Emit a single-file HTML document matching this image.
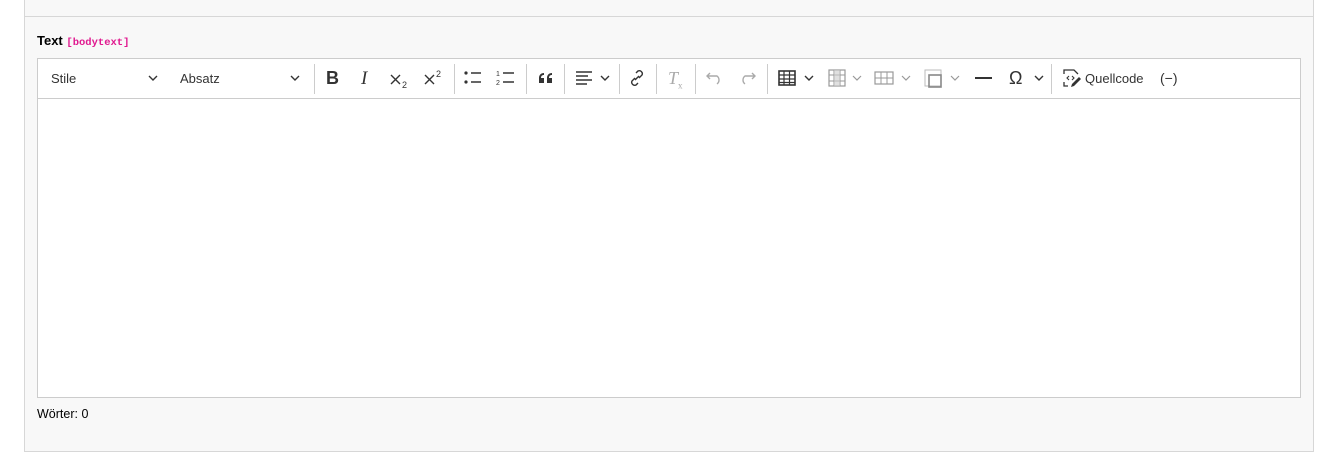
<!DOCTYPE html>
<html><head><meta charset="utf-8"><style>
body{margin:0;width:1336px;height:467px;background:#fff;font-family:"Liberation Sans",sans-serif;position:relative;overflow:hidden}
.panel{position:absolute;left:24px;top:-1px;width:1288px;height:451px;background:#f8f8f8;border:1px solid #d7d7d7}
.sep1{position:absolute;left:24px;top:16px;width:1290px;height:1px;background:#d7d7d7}
.lbl{position:absolute;left:37px;top:33px;font-size:13px;font-weight:bold;color:#000}
.lbl span{font-family:"Liberation Mono",monospace;font-size:10.5px;color:#e0198f;font-weight:bold}
.ed{position:absolute;left:37px;top:58px;width:1262px;height:338px;border:1px solid #ccc;background:#fff}
.tb{position:absolute;left:0;top:0;width:1262px;height:39px;border-bottom:1px solid #ccc;background:#fff}
.t{position:absolute;top:0;height:39px;line-height:39px;font-size:13px;color:#333}
.s{position:absolute;top:5px;width:1px;height:30px;background:#ccc}
svg{position:absolute}
.wc{position:absolute;left:37px;top:407px;font-size:12.5px;color:#000}
</style></head><body>
<div class="panel"></div><div class="sep1"></div>
<div class="lbl">Text <span>[bodytext]</span></div>
<div class="ed"><div class="tb">
<div class="t" style="left:13px">Stile</div>
<svg style="left:110px;top:15px" width="10" height="8"><path d="M1 2l4 4 4-4" stroke="#333" stroke-width="1.4" fill="none"/></svg>
<div class="t" style="left:142px">Absatz</div>
<svg style="left:252px;top:15px" width="10" height="8"><path d="M1 2l4 4 4-4" stroke="#333" stroke-width="1.4" fill="none"/></svg>
<div class="s" style="left:276px"></div>
<div class="t" style="left:288px;font-weight:bold;font-size:18px">B</div>
<div class="t" style="left:323px;font-family:'Liberation Serif';font-style:italic;font-size:19px">I</div>
<svg style="left:352px;top:12px" width="22" height="18"><path d="M1 4l9 9M10 4l-9 9" stroke="#333" stroke-width="1.4"/><text x="12" y="17" font-size="9" fill="#333" font-family="Liberation Sans">2</text></svg>
<svg style="left:386px;top:10px" width="22" height="18"><path d="M1 6l9 9M10 6l-9 9" stroke="#333" stroke-width="1.4"/><text x="12" y="8" font-size="9" fill="#333" font-family="Liberation Sans">2</text></svg>
<div class="s" style="left:416px"></div>
<svg style="left:426px;top:11px" width="18" height="16"><circle cx="2" cy="3" r="1.6" fill="#333"/><circle cx="2" cy="12" r="1.6" fill="#333"/><path d="M7 3h10M7 12h10" stroke="#333" stroke-width="1.5"/></svg>
<svg style="left:458px;top:10px" width="20" height="18"><text x="0" y="7" font-size="7" fill="#333">1</text><text x="0" y="16" font-size="7" fill="#333">2</text><path d="M7 4h11M7 13h11" stroke="#333" stroke-width="1.5"/></svg>
<div class="s" style="left:488px"></div>
<svg style="left:500px;top:13px" width="16" height="12"><path d="M1 11V6c0-3 2-5 5-5v2c-2 0-3 1-3 3h3v5zM9 11V6c0-3 2-5 5-5v2c-2 0-3 1-3 3h3v5z" fill="#333"/></svg>
<div class="s" style="left:526px"></div>
<svg style="left:538px;top:12px" width="16" height="14"><path d="M0 1h16M0 5h12M0 9h16M0 13h11" stroke="#333" stroke-width="1.4"/></svg>
<svg style="left:562px;top:15px" width="10" height="8"><path d="M1 2l4 4 4-4" stroke="#333" stroke-width="1.4" fill="none"/></svg>
<div class="s" style="left:581px"></div>
<svg style="left:591px;top:10px" width="16" height="18"><path d="M7 4l2-2a3 3 0 014 4l-3 3M9 14l-2 2a3 3 0 01-4-4l3-3M6 11l4-4" stroke="#333" stroke-width="1.4" fill="none"/></svg>
<div class="s" style="left:618px"></div>
<div class="t" style="left:630px;font-family:'Liberation Serif';font-style:italic;font-size:18px;color:#aaa">T<sub style="font-size:9px;font-style:normal">x</sub></div>
<div class="s" style="left:657px"></div>
<svg style="left:668px;top:12px" width="18" height="14"><path d="M4 2L1 5l3 3M1 5h10a5 5 0 010 8" stroke="#aaa" stroke-width="1.4" fill="none"/></svg>
<svg style="left:700px;top:12px" width="18" height="14"><path d="M14 2l3 3-3 3M17 5H7a5 5 0 000 8" stroke="#aaa" stroke-width="1.4" fill="none"/></svg>
<div class="s" style="left:729px"></div>
<svg style="left:740px;top:11px" width="18" height="16"><rect x="1" y="1" width="16" height="14" fill="none" stroke="#333" stroke-width="1.6"/><path d="M1 5h16M1 9h16M1 12.5h16M6 1v14M11.5 1v14" stroke="#333" stroke-width="1.2"/></svg>
<svg style="left:766px;top:15px" width="10" height="8"><path d="M1 2l4 4 4-4" stroke="#333" stroke-width="1.4" fill="none"/></svg>
<svg style="left:790px;top:10px" width="18" height="18"><rect x="1" y="1" width="16" height="16" fill="none" stroke="#999" stroke-width="1.2"/><path d="M6 1v16M12 1v16M1 6h16M1 12h16" stroke="#999" stroke-width="1"/><rect x="6" y="1" width="6" height="16" fill="#ccc" opacity=".6"/></svg>
<svg style="left:814px;top:15px" width="10" height="8"><path d="M1 2l4 4 4-4" stroke="#999" stroke-width="1.2" fill="none"/></svg>
<svg style="left:836px;top:10px" width="20" height="18"><rect x="1" y="3" width="18" height="12" fill="none" stroke="#999" stroke-width="1.2"/><path d="M1 9h18M7 3v12M13 3v12" stroke="#999" stroke-width="1"/></svg>
<svg style="left:863px;top:15px" width="10" height="8"><path d="M1 2l4 4 4-4" stroke="#999" stroke-width="1.2" fill="none"/></svg>
<svg style="left:886px;top:10px" width="20" height="20"><rect x="1" y="1" width="16" height="16" fill="none" stroke="#bbb" stroke-width="1"/><rect x="5" y="6" width="12" height="12" fill="none" stroke="#888" stroke-width="1.6"/></svg>
<svg style="left:912px;top:15px" width="10" height="8"><path d="M1 2l4 4 4-4" stroke="#999" stroke-width="1.2" fill="none"/></svg>
<div style="position:absolute;left:937px;top:18px;width:17px;height:2px;background:#333"></div>
<div class="t" style="left:971px;font-size:18px">Ω</div>
<svg style="left:996px;top:15px" width="10" height="8"><path d="M1 2l4 4 4-4" stroke="#333" stroke-width="1.4" fill="none"/></svg>
<div class="s" style="left:1013px"></div>
<svg style="left:1023px;top:9px" width="22" height="20"><path d="M3 6V2h10l4 4M3 14v4h4" stroke="#333" stroke-width="1.3" fill="none"/><path d="M8 8l-2 2 2 2M11 8l2 2-2 2" stroke="#333" stroke-width="1.1" fill="none"/><path d="M10 19l1-3 7-7 2 2-7 7z" fill="#333"/></svg>
<div class="t" style="left:1047px">Quellcode</div>
<div class="t" style="left:1122px;font-size:14px">(−)</div>
</div></div>
<div class="wc">Wörter: 0</div>
</body></html>
